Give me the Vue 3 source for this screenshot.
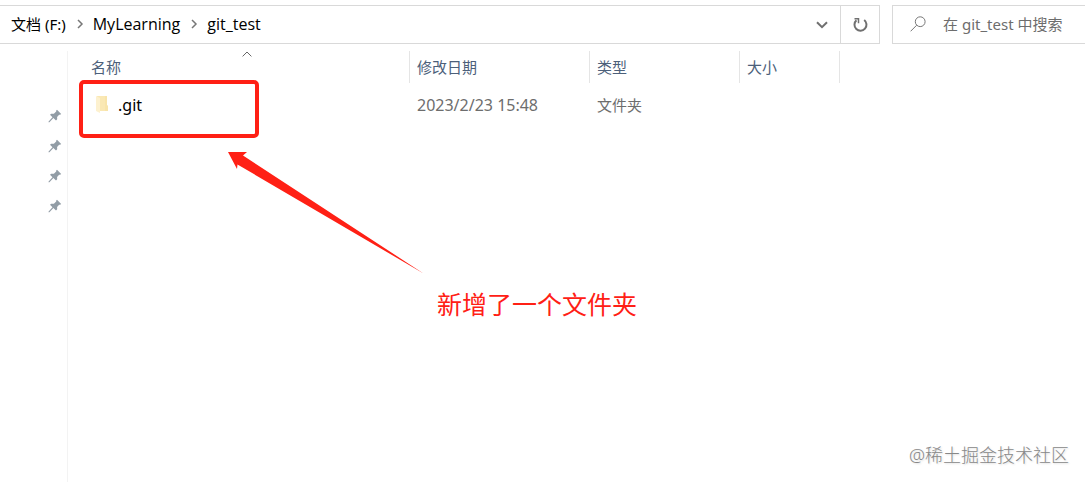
<script setup>
const crumbs = ['文档 (F:)', 'MyLearning', 'git_test']
const pins = ['快速访问 1', '快速访问 2', '快速访问 3', '快速访问 4']
const files = [{ name: '.git', date: '2023/2/23 15:48', type: '文件夹', size: '' }]
</script>

<template>
  <div class="window">
    <header class="toolbar">
      <div class="address">
        <nav class="crumbs">
          <template v-for="(crumb, i) in crumbs" :key="crumb">
            <svg v-if="i" class="sep" viewBox="0 0 8 10"><path d="M2 1l4 4-4 4" /></svg>
            <a href="#" class="crumb">{{ crumb }}</a>
          </template>
        </nav>
        <button class="history" aria-label="历史记录">
          <svg width="12" height="8" viewBox="0 0 12 8"><path d="M1 1.2l5 5 5-5" /></svg>
        </button>
        <button class="refresh" aria-label="刷新">
          <svg width="16" height="16" viewBox="0 0 16 16">
            <path d="M12.200 3A6 6 0 1 1 4.400 3.300" />
            <path class="thin" d="M2.500 1.800h4v4.400" />
          </svg>
        </button>
      </div>
      <label class="search">
        <svg width="16" height="16" viewBox="0 0 16 16">
          <circle cx="10.2" cy="5.7" r="4.9" />
          <path d="M6.7 9.2L.6 15.3" />
        </svg>
        <input type="text" placeholder="在 git_test 中搜索" aria-label="搜索" />
      </label>
    </header>

    <div class="body">
      <aside class="sidebar">
        <button v-for="pin in pins" :key="pin" class="pin" :aria-label="pin">
          <svg width="14" height="14" viewBox="0 0 14 14">
            <path d="M9 .7L13.2 5l-1.1.8-1-.1-2 2.2.1 2.400-1.200 1.200-2.600-2.400-4 4.100-.9.1.1-.8 3.900-4.200L2 5.800l1.200-1.100 2.700.1 2.300-2.200V1.500z" />
          </svg>
        </button>
      </aside>

      <main class="content">
        <table class="files">
          <thead>
            <tr>
              <th class="name">
                名称
                <svg class="sort" width="10" height="6" viewBox="0 0 10 6"><path d="M.6 5.400L5 1l4.400 4.400" /></svg>
              </th>
              <th class="date">修改日期</th>
              <th class="type">类型</th>
              <th class="size">大小</th>
              <th class="rest"></th>
            </tr>
          </thead>
          <tbody>
            <tr v-for="file in files" :key="file.name">
              <td class="name">
                <span class="entry">
                  <svg width="12" height="18" viewBox="0 0 12 18">
                    <path fill="#fae8b4" d="M1 0h10v9l1 1v5H2z" />
                    <path fill="#f5dfa0" d="M9 0h2v9l1 1v5H9z" opacity=".5" />
                    <path fill="#fdf1cf" d="M0 0l4 2v15L0 15z" />
                  </svg>
                  {{ file.name }}
                </span>
              </td>
              <td class="stamp">{{ file.date }}</td>
              <td>{{ file.type }}</td>
              <td>{{ file.size }}</td>
              <td></td>
            </tr>
          </tbody>
        </table>
      </main>
    </div>

    <div class="frame"></div>
    <svg class="arrow" width="196" height="122" viewBox="0 0 196 122">
      <path d="M0 0h19l-4 3.500L195.500 121.500 9.500 12.500 9 17z" />
    </svg>
    <p class="note">新增了一个文件夹</p>
    <p class="watermark">@稀土掘金技术社区</p>
  </div>
</template>

<style>
body {
  margin: 0;
  background: #fff;
}
</style>

<style scoped>
.window {
  position: relative;
  display: flex;
  flex-direction: column;
  box-sizing: border-box;
  min-height: 100vh;
  padding-top: 5px;
  overflow: hidden;
  font-family: "Noto Sans", "Noto Sans CJK SC", sans-serif;
  font-size: 15px;
  line-height: 20px;
  color: #000;
}

button {
  display: flex;
  align-items: center;
  justify-content: center;
  padding: 0;
  border: 0;
  background: none;
}

.toolbar {
  display: flex;
  gap: 12px;
  height: 39px;
}

.address {
  display: flex;
  flex: 1;
  border: 1px solid #d9d9d9;
  border-left: 0;
}

.crumbs {
  display: flex;
  flex: 1;
  align-items: center;
  padding: 0 0 2px 11px;
}

.crumb {
  color: #000;
  text-decoration: none;
}

.sep + .crumb {
  font-family: "Open Sans", "Noto Sans CJK SC", sans-serif;
  font-size: 16px;
}

.sep {
  width: 8px;
  height: 10px;
  margin: 0 9px 0 10px;
  fill: none;
  stroke: #777;
  stroke-width: 1.5;
}

.history {
  width: 37px;
}

.history svg,
.refresh svg {
  fill: none;
  stroke: #707070;
  stroke-width: 2;
}

.refresh {
  width: 39px;
  border-left: 1px solid #d9d9d9;
}

.refresh .thin {
  stroke-width: 1.5;
}

.search {
  display: flex;
  align-items: center;
  gap: 17px;
  box-sizing: border-box;
  width: 193px;
  padding: 0 0 2px 17px;
  border: 1px solid #d9d9d9;
  border-right: 0;
}

.search svg {
  flex: none;
  fill: none;
  stroke: #777;
}

.search input {
  flex: 1;
  min-width: 0;
  padding: 0;
  border: 0;
  outline: 0;
  background: none;
  font: inherit;
  color: #6d6d6d;
}

.search input::placeholder {
  color: #6d6d6d;
}

.body {
  display: flex;
  flex: 1;
  padding-top: 7px;
}

.sidebar {
  display: flex;
  flex-direction: column;
  gap: 16px;
  align-items: flex-end;
  box-sizing: border-box;
  width: 68px;
  padding: 58px 5px 0 0;
  border-right: 1px solid #f3f3f3;
}

.pin svg {
  fill: #929da6;
}

.content {
  flex: 1;
}

.files {
  width: 100%;
  border-collapse: separate;
  border-spacing: 0;
  table-layout: fixed;
}

th {
  position: relative;
  box-sizing: border-box;
  height: 32px;
  padding: 0 7px;
  border-right: 1px solid #e5e5e5;
  font-weight: 400;
  text-align: left;
  color: #4c607a;
}

th.name {
  width: 342px;
  padding-left: 23px;
}

th.date {
  width: 180px;
}

th.type {
  width: 150px;
}

th.size {
  width: 100px;
}

th.rest {
  border-right: 0;
}

.sort {
  position: absolute;
  top: 0;
  left: 174px;
  fill: none;
  stroke: #666;
}

td {
  height: 44px;
  padding: 0 7px;
  color: #6d6d6d;
}

td.name {
  padding-left: 28px;
  font-size: 16px;
  color: #000;
}

td.stamp {
  font-size: 16px;
}

.entry {
  display: flex;
  align-items: center;
  gap: 10px;
}

.frame {
  position: absolute;
  top: 80px;
  left: 79px;
  box-sizing: border-box;
  width: 180px;
  height: 58px;
  border: 4px solid #ff2015;
  border-radius: 5px;
}

.arrow {
  position: absolute;
  top: 152px;
  left: 228px;
  fill: #ff2015;
}

.note {
  position: absolute;
  top: 288px;
  left: 437px;
  margin: 0;
  font-size: 25px;
  font-weight: 400;
  line-height: 32px;
  color: #ff2015;
}

.watermark {
  position: absolute;
  right: 16px;
  bottom: 15px;
  margin: 0;
  font-size: 18px;
  font-weight: 300;
  line-height: 24px;
  color: #888;
  text-shadow: 1px 1px 2px #ddd;
}
</style>
